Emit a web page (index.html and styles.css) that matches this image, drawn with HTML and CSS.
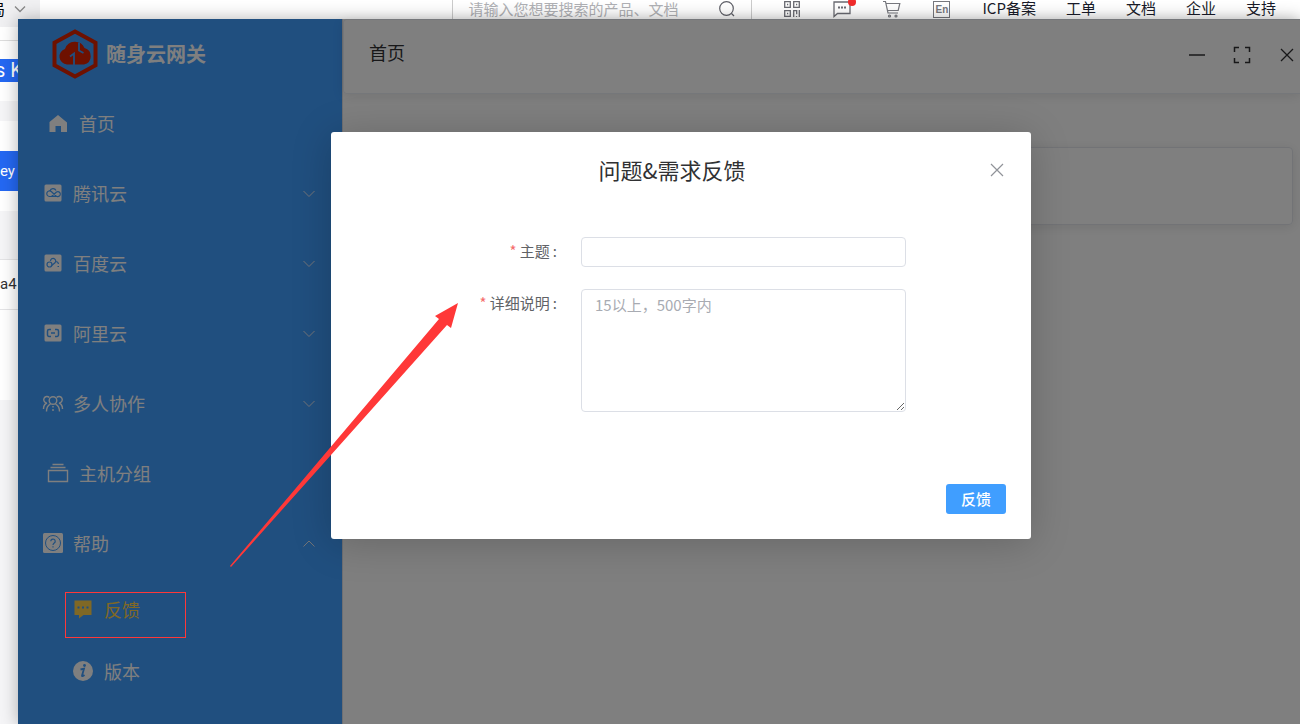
FILE: index.html
```html
<!DOCTYPE html>
<html lang="zh-CN">
<head>
<meta charset="utf-8">
<title>随身云网关</title>
<link rel="stylesheet" href="styles.css">
</head>
<body>
<div class="console">
  <header class="topbar">
    <button class="region" type="button">局
      <svg class="region-arrow" viewBox="0 0 12 12"><path d="M1 3.500l5 5 5-5" fill="none" stroke="#888" stroke-width="1.300"/></svg>
    </button>
    <div class="topbar-right">
      <form class="search">
        <input class="search-input" type="text" aria-label="搜索" placeholder="请输入您想要搜索的产品、文档">
        <svg class="ico18" viewBox="0 0 18 18" fill="none" stroke="#5f6068" stroke-width="1.200"><circle cx="8.500" cy="8.500" r="6.800"/><path d="M13.500 13.500l2.500 2.500"/></svg>
      </form>
      <div class="tools">
        <svg class="ico18" viewBox="0 0 18 18" fill="none" stroke="#6a6b72" stroke-width="1.300"><path d="M1.700 1.700h5.600v5.600H1.700zM10.700 1.700h5.600v5.600h-5.600zM1.700 10.700h5.600v5.600H1.700zM10.700 17v-6.300h3v3.600M16.300 10v7M13.500 17v-1"/><path d="M4 4.500h1.200M13 4.500h1.200M4 13.500h1.200" stroke-width="1.600"/></svg>
        <span class="msg">
          <svg class="ico18" viewBox="0 0 18 18" fill="none" stroke="#6a6b72" stroke-width="1.300"><path d="M1 2h16v11.500H4.500L1 16.500z"/><path d="M5 7.500h2M8 7.500h2M11 7.500h2" stroke-width="2"/></svg>
          <i class="dot"></i>
        </span>
        <svg class="ico18" viewBox="0 0 18 18" fill="none" stroke="#77787e" stroke-width="1.200"><path d="M0 1.500h2.500L5 13h10M3.200 3.500h13.600l-1.600 7H4.500"/><circle cx="6.500" cy="16" r="1"/><circle cx="13" cy="16" r="1"/></svg>
        <span class="lang">En</span>
      </div>
      <nav class="links">
        <a href="#">ICP备案</a><a href="#">工单</a><a href="#">文档</a><a href="#">企业</a><a href="#">支持</a>
      </nav>
    </div>
  </header>
  <div class="strip">
    <div class="s-title">s K</div>
    <div class="s-band"></div>
    <div class="s-btn">ey</div>
    <div class="s-head"></div>
    <div class="s-row">a4</div>
    <div class="s-blank"></div>
    <div class="s-foot"></div>
  </div>
</div>

<div class="window">
  <aside class="sidebar">
    <div class="brand">
      <svg class="logo" viewBox="0 0 50 52"><path d="M25 3.500L45.500 14.700v22.600L25 48.500 4.500 37.300V14.700z" fill="none" stroke="#dd2200" stroke-width="4"/><path d="M17 36.500a8 8 0 0 1-2-15.600A10.500 10.500 0 0 1 34.500 20 8.500 8.500 0 0 1 34 36.500z" fill="#dd2200"/><path d="M20 28.500l4-3v12M33.500 25l-4.500-2.500V14.500" fill="none" stroke="#409eff" stroke-width="1.800"/></svg>
      <strong>随身云网关</strong>
    </div>
    <nav class="menu">
      <a class="item leaf" href="#"><svg class="ico" viewBox="0 0 24 24"><path d="M12 4l9 7.500V21h-6v-6H9.500v6H3.500V11z" fill="#fff"/></svg>首页</a>
      <a class="item" href="#"><svg class="ico" viewBox="0 0 24 24"><rect x="3.500" y="3.500" width="17" height="17" rx="1.500" fill="#fff"/><path d="M8.500 15.500a2.800 2.800 0 1 1 1.800-5L15.500 15.500zM9 10a3.200 3.200 0 0 1 6-.5M10.500 15.500l5-4.500a2.500 2.500 0 1 1 .5 4.500z" fill="none" stroke="#409eff" stroke-width="1.200"/></svg>腾讯云<svg class="arrow" viewBox="0 0 12 12"><path d="M.5 4L6 9.500 11.500 4"/></svg></a>
      <a class="item" href="#"><svg class="ico" viewBox="0 0 24 24"><rect x="3.500" y="3.500" width="17" height="17" rx="1.500" fill="#fff"/><circle cx="8.500" cy="13.500" r="2.500" fill="none" stroke="#409eff" stroke-width="1.200"/><path d="M9.500 10a2.600 2.600 0 1 1 4.500 1.800l-4 3.200M14.500 10.500a3 3 0 0 1 3 2.500M16.500 15.500h1.500" fill="none" stroke="#409eff" stroke-width="1.200"/></svg>百度云<svg class="arrow" viewBox="0 0 12 12"><path d="M.5 4L6 9.500 11.500 4"/></svg></a>
      <a class="item" href="#"><svg class="ico" viewBox="0 0 24 24"><rect x="3.500" y="3.500" width="17" height="17" rx="1.500" fill="#fff"/><path d="M10 8.500H8A1.500 1.500 0 0 0 6.500 10v4A1.500 1.500 0 0 0 8 15.500h2M14 8.500h2a1.500 1.500 0 0 1 1.500 1.500v4a1.500 1.500 0 0 1-1.500 1.500h-2M10 12h4" fill="none" stroke="#409eff" stroke-width="1.500"/></svg>阿里云<svg class="arrow" viewBox="0 0 12 12"><path d="M.5 4L6 9.500 11.500 4"/></svg></a>
      <a class="item" href="#"><svg class="ico" viewBox="0 0 24 24" fill="none" stroke="#fff" stroke-width="1.400"><circle cx="12" cy="9.500" r="3.800"/><path d="M8.300 6.500a3.200 3.200 0 1 0-3 5.300M15.700 6.500a3.200 3.200 0 1 1 3 5.300M2.500 18c0-3 1-5 3.500-6M21.500 18c0-3-1-5-3.500-6M5.500 20.500c0-4 1.500-6 4-7.300M18.500 20.500c0-4-1.500-6-4-7.300M12 15v1.500M12 18v2"/></svg>多人协作<svg class="arrow" viewBox="0 0 12 12"><path d="M.5 4L6 9.500 11.500 4"/></svg></a>
      <a class="item leaf" href="#"><svg class="ico" viewBox="0 0 24 24" fill="none" stroke="#fff" stroke-width="1.400"><path d="M2.500 9.500h19v11h-19zM4.500 6.500h15M6.500 3.500h11"/></svg>主机分组</a>
      <a class="item" href="#"><svg class="ico" viewBox="0 0 24 24"><rect x="2" y="2" width="20" height="20" rx="1.500" fill="#fff"/><circle cx="12" cy="12" r="7.500" fill="none" stroke="#409eff"/><path d="M9.800 10.300a2.200 2.200 0 1 1 3.400 1.800c-.8.600-1.200 1-1.200 2M12 15.300v1.200" fill="none" stroke="#409eff" stroke-width="1.200"/></svg>帮助<svg class="arrow" viewBox="0 0 12 12"><path d="M.5 9.500L6 4l5.500 5.500"/></svg></a>
      <a class="item sub active" href="#"><svg class="ico" viewBox="0 0 24 24"><path d="M3.500 3.500h17V18h-8l-4.500 3.500V18H3.500z" fill="#ffd04b"/><path d="M6.500 10.500h2M11 10.500h2M15.500 10.500h2" stroke="#409eff" stroke-width="2"/></svg>反馈</a>
      <a class="item sub" href="#"><svg class="ico" viewBox="0 0 24 24"><circle cx="12" cy="12" r="10" fill="#fff"/><path d="M9.500 10.500l3.500-.8-2 7c0 .8 1 .5 2.500-.7" fill="none" stroke="#409eff" stroke-width="1.800"/><circle cx="13.500" cy="6.500" r="1.400" fill="#409eff"/></svg>版本</a>
    </nav>
  </aside>
  <main class="main">
    <header class="main-head">
      <span class="crumb">首页</span>
      <div class="controls">
        <button type="button" aria-label="最小化"><svg viewBox="0 0 18 18"><path d="M1 9h16" stroke-width="1.500"/></svg></button>
        <button type="button" aria-label="全屏"><svg viewBox="0 0 18 18"><path d="M1.500 6V1.500H6M12 1.500h4.500V6M16.500 12v4.500H12M6 16.500H1.500V12" stroke-width="1.500"/></svg></button>
        <button type="button" aria-label="关闭"><svg viewBox="0 0 18 18"><path d="M3 3l12 12M15 3L3 15" stroke-width="1.300"/></svg></button>
      </div>
    </header>
    <section class="card"></section>
  </main>

  <div class="overlay">
    <form class="dialog">
      <div class="dialog-head">
        <h1>问题&amp;需求反馈</h1>
        <button class="close" type="button" aria-label="关闭"><svg viewBox="0 0 14 14"><path d="M1 1l12 12M13 1L1 13" fill="none" stroke="#909399" stroke-width="1.200"/></svg></button>
      </div>
      <div class="fields">
        <label for="subject"><i>*</i> 主题<span class="colon">:</span></label>
        <input id="subject" class="field" type="text">
        <label for="detail"><i>*</i> 详细说明<span class="colon">:</span></label>
        <textarea id="detail" class="field area" placeholder="15以上，500字内"></textarea>
      </div>
      <div class="dialog-foot"><button class="submit" type="button">反馈</button></div>
    </form>
  </div>
</div>

<div class="mark"></div>
<svg class="pointer" viewBox="0 0 230 266"><path d="M0 263L209 16 205 13 228 0 221 25 217 22 1 264z" fill="#ff3838"/></svg>
</body>
</html>
```
FILE: styles.css
```css
* { box-sizing: border-box; }

body {
  margin: 0;
  min-height: 100vh;
  overflow: hidden;
  font-family: "Noto Sans CJK SC", sans-serif;
  font-size: 15px;
  color: #303133;
  background: #fff;
}

a { color: inherit; text-decoration: none; }
button { font-family: inherit; border: 0; padding: 0; background: none; }
svg { display: block; flex: none; }
i { font-style: normal; }

/* Console page behind the window */
.topbar {
  display: flex;
  justify-content: space-between;
  height: 41px;
  border-bottom: 1px solid #ddd;
}

.region {
  display: flex;
  align-items: center;
  justify-content: flex-end;
  gap: 9px;
  width: 40px;
  height: 27px;
  padding: 0 14px 9px 0;
  font-size: 15px;
  line-height: 18px;
  background: #f0f0f2;
  overflow: hidden;
}

.region-arrow { width: 12px; height: 12px; }

.topbar-right {
  display: flex;
  align-items: center;
  height: 18px;
  padding-right: 24px;
}

.search {
  display: flex;
  align-items: center;
  width: 300px;
  height: 20px;
  padding: 0 15px;
  border: solid #ccc;
  border-width: 0 1px;
}

.search-input {
  flex: 1;
  min-width: 0;
  height: 20px;
  padding: 0 0 2px;
  border: 0;
  font: inherit;
  line-height: 18px;
  background: none;
}

.search-input::placeholder { color: #b0b1b5; }
.ico18 { width: 18px; height: 18px; }

.tools {
  display: flex;
  align-items: center;
  gap: 32px;
  padding: 0 32px 0 31px;
}

.msg { position: relative; }

.dot {
  position: absolute;
  top: -2px;
  right: -5px;
  width: 8px;
  height: 8px;
  border-radius: 50%;
  background: #f02b2b;
}

.lang {
  width: 17px;
  height: 17px;
  border: 1px solid #77787e;
  font: bold 10px/15px "Liberation Sans", sans-serif;
  text-align: center;
  color: #77787e;
}

.links { display: flex; gap: 30px; line-height: 16px; padding-bottom: 2px; color: #191b29; }

.strip {
  width: 18px;
  padding-top: 18px;
  overflow: hidden;
  white-space: nowrap;
  font-family: Roboto, sans-serif;
}

.s-title {
  display: flex;
  justify-content: center;
  height: 23px;
  font-size: 20px;
  line-height: 23px;
  color: #fff;
  background: #2468f2;
}

.s-band { height: 20px; margin: 19px 0 30px; background: #f5f5f7; }
.s-btn { height: 40px; line-height: 40px; color: #fff; background: #2468f2; }
.s-head { height: 48px; margin-top: 20px; background: #f5f5f7; }
.s-row { height: 51px; line-height: 49px; border: solid #e4e4e6; border-width: 1px 0; }
.s-blank { height: 90px; }
.s-foot { height: 324px; background: #f5f5f7; }

/* Application window */
.window {
  position: absolute;
  inset: 19px 0 0 18px;
  display: flex;
  box-shadow: 0 0 16px rgba(0, 0, 0, .3);
  background: #fff;
}

.sidebar {
  width: 325px;
  border-right: 1px solid #dcdfe6;
  color: #fff;
  background: #409eff;
}

.brand {
  display: flex;
  align-items: center;
  gap: 6px;
  height: 69px;
  padding-left: 32px;
  font-size: 20px;
}

.logo { width: 50px; height: 52px; }

.item {
  display: flex;
  align-items: center;
  gap: 8px;
  height: 70px;
  padding: 0 27px 0 23px;
  font-size: 18px;
}

.leaf { padding-left: 28px; gap: 9px; }
.sub { height: 62px; padding-left: 53px; gap: 9px; }
.active { color: #ffd04b; }
.ico { width: 24px; height: 24px; }

.arrow {
  width: 12px;
  height: 12px;
  margin-left: auto;
  fill: none;
  stroke: #e4e7ed;
}

.main { flex: 1; min-width: 0; }

.main-head {
  display: flex;
  align-items: center;
  justify-content: space-between;
  height: 75px;
  padding: 0 4px 4px 25px;
  border: 1px solid #ebeef5;
  border-right: 0;
  border-radius: 4px 0 0 4px;
  box-shadow: 0 2px 12px rgba(0, 0, 0, .1);
  font-size: 18px;
}

.crumb { padding-bottom: 6px; }
.controls { display: flex; gap: 27px; }
.controls svg { width: 18px; height: 18px; fill: none; stroke: #303133; }

.card {
  height: 78px;
  margin: 53px 7px 0 20px;
  border: 1px solid #e4e7ed;
  border-radius: 4px;
  box-shadow: 0 2px 12px rgba(0, 0, 0, .1);
}

/* Feedback dialog */
.overlay {
  position: absolute;
  inset: 0;
  display: flex;
  justify-content: center;
  align-items: flex-start;
  padding: 113px 0 0 44px;
  background: rgba(0, 0, 0, .5);
}

.dialog {
  width: 700px;
  padding: 21px 25px 25px;
  border-radius: 3px;
  box-shadow: 0 4px 40px rgba(0, 0, 0, .2);
  background: #fff;
}

.dialog-head {
  display: flex;
  align-items: center;
}

.dialog-head h1 {
  flex: 1;
  margin: 0;
  font-size: 22px;
  font-weight: 400;
  line-height: 33px;
  text-align: center;
}

.close { padding: 2px; }
.close svg { width: 14px; height: 14px; }

.fields {
  display: grid;
  grid-template-columns: 201px 325px;
  gap: 22px 24px;
  padding-top: 51px;
}

.fields label {
  text-align: right;
  line-height: 28px;
  color: #606266;
}

.fields i { color: #f56c6c; }
.colon { padding-left: 3px; }

.field {
  height: 30px;
  padding: 4px 13px;
  border: 1px solid #dcdfe6;
  border-radius: 4px;
  font: inherit;
  line-height: 22px;
}

.area { height: 123px; resize: vertical; }
.field::placeholder { color: #a8abb2; }

.dialog-foot { display: flex; justify-content: flex-end; padding-top: 72px; }

.submit {
  width: 60px;
  height: 30px;
  padding-bottom: 2px;
  border-radius: 3px;
  font-size: 15px;
  font-weight: 500;
  color: #fff;
  background: #409eff;
}

/* Annotations over the window */
.mark {
  position: absolute;
  left: 65px;
  top: 592px;
  width: 121px;
  height: 46px;
  border: 1px solid #ff3838;
}

.pointer {
  position: absolute;
  left: 230px;
  top: 303px;
  width: 230px;
  height: 266px;
  pointer-events: none;
}
```
